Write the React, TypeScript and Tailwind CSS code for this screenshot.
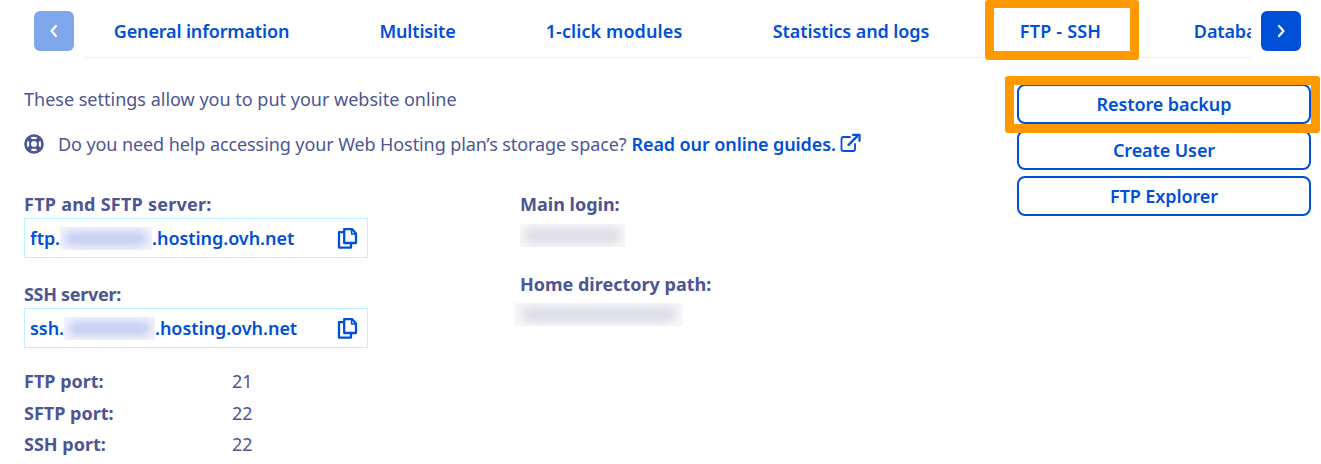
import React from "react";

const blue = "text-[#0050d7]";

function Chevron({ dir }: { dir: "left" | "right" }) {
  return (
    <svg width="10" height="14" viewBox="0 0 10 14" fill="none" stroke="currentColor" strokeWidth="2.2" strokeLinecap="round" strokeLinejoin="round">
      {dir === "left" ? <path d="M7 2 L2.5 7 L7 12" /> : <path d="M3 2 L7.5 7 L3 12" />}
    </svg>
  );
}

function CopyIcon() {
  return (
    <svg width="21" height="22" viewBox="0 0 21 22" fill="none" stroke="#0050d7" strokeWidth="2.3" strokeLinejoin="round" strokeLinecap="round">
      <path d="M7.2 2.2 V16 H19 V6.5 L15.2 2.2 Z" />
      <path d="M14.6 2.5 V7 H19" strokeWidth="1.5" />
      <path d="M7 5.2 H2 V20.6 H14 V16" />
    </svg>
  );
}

function LifeRing() {
  return (
    <svg width="20" height="20" viewBox="0 0 20 20" fill="none" stroke="#4d5693">
      <circle cx="10" cy="10" r="8.5" strokeWidth="2.6" />
      <circle cx="10" cy="10" r="3.9" strokeWidth="2" />
      <path d="M4 4 L7.2 7.2 M16 4 L12.8 7.2 M4 16 L7.2 12.8 M16 16 L12.8 12.8" strokeWidth="4" />
    </svg>
  );
}

function ExternalIcon() {
  return (
    <svg width="21" height="20" viewBox="0 0 21 20" fill="none" stroke="#0050d7" strokeLinecap="round" strokeLinejoin="round">
      <path d="M10 4 H3.5 Q1.5 4 1.5 6 V16 Q1.5 18 3.5 18 H13 Q15 18 15 16 V11" strokeWidth="1.8" />
      <path d="M8.5 12 L17 3.5" strokeWidth="2.4" />
      <path d="M13 1.8 H19.5 V8" strokeWidth="2.2" />
    </svg>
  );
}

function Blurred({ w, tone, back }: { w: string; tone: string; back: string }) {
  return (
    <span className={`inline-flex items-center justify-center h-[23px] overflow-hidden align-middle ${back} ${w}`}>
      <span className={`block h-[15px] w-[92%] rounded-full blur-[4px] ${tone}`} />
    </span>
  );
}

function ServerField({ prefix, blurW }: { prefix: string; blurW: string }) {
  return (
    <div className="flex items-center justify-between h-[40px] w-[344px] border border-[#bef1ff] pl-[5px] pr-[9px]">
      <span className={`flex items-center pt-[1px] font-semibold tracking-[-0.05px] ${blue}`}>
        {prefix}
        <Blurred w={blurW} tone="bg-[#c6cff1]" back="bg-[#f2f4fc]" />
        .hosting.ovh.net
      </span>
      <CopyIcon />
    </div>
  );
}

function Port({ label, value }: { label: string; value: string }) {
  return (
    <div className="flex h-[31.5px] items-center">
      <span className="w-[208px] font-bold">{label}</span>
      <span>{value}</span>
    </div>
  );
}

const tabs = [
  { label: "General information", cell: "w-[175px] tracking-[-0.15px]" },
  { label: "Multisite", cell: "w-[75px] tracking-[-0.15px]" },
  { label: "1-click modules", cell: "w-[136px] tracking-[0.1px]" },
  { label: "Statistics and logs", cell: "w-[156px] tracking-[-0.1px]" },
  { label: "FTP - SSH", cell: "w-[81px] tracking-[0.2px]" },
  { label: "Databases", cell: "w-[94px] tracking-[-0.15px]" },
];

function ActionButton({ label }: { label: string }) {
  return (
    <button className={`h-[40px] w-[294px] rounded-[8px] border-2 border-[#0050d7] bg-white font-semibold tracking-[-0.1px] ${blue}`}>
      {label}
    </button>
  );
}

export default function App() {
  return (
    <div
      className="relative w-[1321px] h-[464px] overflow-hidden bg-white text-[#4d5693] text-[18px]"
      style={{ fontFamily: '"Noto Sans", sans-serif' }}
    >
      {/* tab bar */}
      <div className="flex items-start pl-[34px] pt-[11px]">
        <button className="flex h-[40px] w-[40px] shrink-0 items-center justify-center rounded-[6px] bg-[#80a7ec] text-white">
          <Chevron dir="left" />
        </button>
        <div className="ml-[11px] -mt-[11px] flex h-[58px] w-[1166px] shrink-0 items-center overflow-hidden border-b border-[#e6f1fb] pl-[29px] pt-[5px]">
          <div className={`flex items-center gap-[91px] whitespace-nowrap font-semibold ${blue}`}>
            {tabs.map((t) => (
              <span key={t.label} className={`flex justify-center ${t.cell}`}>
                {t.label}
              </span>
            ))}
          </div>
        </div>
        <button className="ml-[10px] flex h-[40px] w-[40px] shrink-0 items-center justify-center rounded-[6px] bg-[#0050d7] text-white">
          <Chevron dir="right" />
        </button>
      </div>

      {/* content */}
      <div className="flex justify-between pl-[24px] pr-[10px]">
        <div className="w-[900px]">
          <p className="mt-[29px] leading-[24px]">These settings allow you to put your website online</p>
          <div className="mt-[21px] flex items-center leading-[24px]">
            <LifeRing />
            <span className="ml-[14px] tracking-[-0.09px]">Do you need help accessing your Web Hosting plan’s storage space?</span>
            <span className={`ml-[5px] font-semibold tracking-[-0.1px] ${blue}`}>Read our online guides.</span>
            <span className="ml-[4px] -mt-[3px]">
              <ExternalIcon />
            </span>
          </div>

          <div className="mt-[36px] flex">
            <div className="w-[496px]">
              <div className="font-bold leading-[24px] tracking-[0.25px]">FTP and SFTP server:</div>
              <div className="mt-[2px]">
                <ServerField prefix="ftp." blurW="w-[92px]" />
              </div>
              <div className="mt-[24px] font-bold leading-[24px] tracking-[-0.3px]">SSH server:</div>
              <div className="mt-[2px]">
                <ServerField prefix="ssh." blurW="w-[91px]" />
              </div>
              <div className="mt-[18px]">
                <Port label="FTP port:" value="21" />
                <Port label="SFTP port:" value="22" />
                <Port label="SSH port:" value="22" />
              </div>
            </div>
            <div>
              <div className="font-bold leading-[24px]">Main login:</div>
              <div className="mt-[4px] h-[24px]">
                <Blurred w="w-[105px]" tone="bg-[#dcdde6]" back="bg-[#f7f7f9]" />
              </div>
              <div className="mt-[28px] font-bold leading-[24px]">Home directory path:</div>
              <div className="-ml-[5px] mt-[3px] h-[24px]">
                <Blurred w="w-[168px]" tone="bg-[#dcdde6]" back="bg-[#f7f7f9]" />
              </div>
            </div>
          </div>
        </div>

        <div className="mt-[26px] flex flex-col gap-[6px]">
          <ActionButton label="Restore backup" />
          <ActionButton label="Create User" />
          <ActionButton label="FTP Explorer" />
        </div>
      </div>

      {/* annotation boxes */}
      <div className="absolute left-[985px] top-0 h-[60px] w-[154px] rounded-[3px] border-[9px] border-t-[8px] border-[#ff9900]" />
      <div className="absolute left-[1005px] top-[76px] h-[57px] w-[315px] rounded-[3px] border-[9px] border-[#ff9900]" />
    </div>
  );
}
